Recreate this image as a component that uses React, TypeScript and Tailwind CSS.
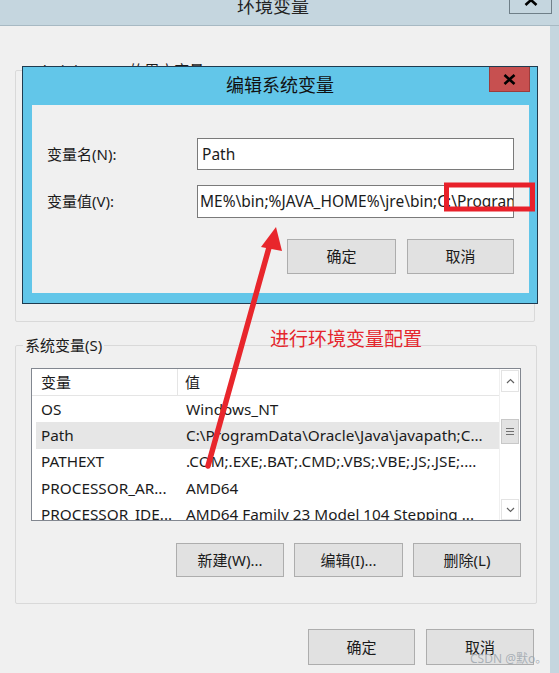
import React from 'react';

const font = "font-['Noto_Sans','Noto_Sans_CJK_SC',sans-serif]";

const btn =
  'flex items-center justify-center h-[34px] border border-[#adadad] bg-[#e1e1e1] text-[15px] text-[#1b1b1b]';

const rows = [
  { name: 'OS', value: 'Windows_NT' },
  { name: 'Path', value: 'C:\\ProgramData\\Oracle\\Java\\javapath;C...', selected: true },
  { name: 'PATHEXT', value: '.COM;.EXE;.BAT;.CMD;.VBS;.VBE;.JS;.JSE;....' },
  { name: 'PROCESSOR_AR...', value: 'AMD64' },
  { name: 'PROCESSOR_IDE...', value: 'AMD64 Family 23 Model 104 Stepping ...' },
];

function Chevron({ up }: { up?: boolean }) {
  return (
    <svg width="9" height="6" viewBox="0 0 9 6" className="text-[#606060]">
      <polyline
        points={up ? '1,5 4.5,1.5 8,5' : '1,1 4.5,4.5 8,1'}
        fill="none"
        stroke="currentColor"
        strokeWidth="1.2"
      />
    </svg>
  );
}

function VarList() {
  return (
    <div className="flex w-[490px] h-[153px] border border-[#828790] bg-white">
      <div className="flex-1 min-w-0 overflow-hidden">
        {/* header */}
        <div className="flex h-[27px] border-b border-[#e5e5e5] text-[15px] leading-[27px]">
          <div className="w-[146px] pl-[9px] border-r border-[#e5e5e5]">变量</div>
          <div className="pl-[7px]">值</div>
        </div>
        {rows.map((r) => (
          <div
            key={r.name}
            className={`flex ml-[4px] h-[26.3px] items-center text-[15.3px] whitespace-nowrap ${
              r.selected ? 'bg-[#e6e6e6]' : ''
            }`}
          >
            <div className="w-[142px] pl-[5px] overflow-hidden">{r.name}</div>
            <div className="pl-[8px]">{r.value}</div>
          </div>
        ))}
      </div>
      {/* scrollbar */}
      <div className="w-[21px] flex flex-col bg-white border-l border-[#f0f0f0]">
        <div className="h-[22px] flex items-center justify-center border border-[#e3e3e3] mt-[1px] mx-[1px]">
          <Chevron up />
        </div>
        <div className="flex-1">
          <div className="mt-[27px] h-[25px] mx-[1px] bg-[#e2e2e2] border border-[#c8c8c8] flex flex-col items-center justify-center gap-[2px]">
            <div className="w-[8px] h-px bg-[#707070]" />
            <div className="w-[8px] h-px bg-[#707070]" />
            <div className="w-[8px] h-px bg-[#707070]" />
          </div>
        </div>
        <div className="h-[21px] flex items-center justify-center border border-[#e3e3e3] mx-[1px]">
          <Chevron />
        </div>
      </div>
    </div>
  );
}

function EditDialog() {
  return (
    <div className="absolute left-[22px] top-[66px] w-[516px] h-[238px] border border-[#1f3b50] bg-[#62c6e9] flex flex-col">
      <div className="flex h-[38px]">
        <div className="flex-1 pl-[48px] text-center text-[18px] leading-[36px] text-[#111]">编辑系统变量</div>
        <div className="w-[41px] h-[25px] mr-[7px] bg-[#c75050] border border-[#9c3c3c] border-t-0 flex items-center justify-center">
          <svg width="13" height="11" viewBox="0 0 13 11">
            <path d="M1.5 1 L11.5 10 M11.5 1 L1.5 10" stroke="#000" strokeWidth="2.6" />
          </svg>
        </div>
      </div>
      <div className="ml-[9px] mr-[8px] h-[188px] bg-[#f0f0f0] pt-[33px] px-[15px]">
        <div className="flex items-center h-[32px]">
          <div className="w-[150px] text-[15px]">变量名(N):</div>
          <div className="w-[317px] h-[32px] border border-[#7a7a7a] bg-white pl-[4px] text-[15.5px] leading-[30px]">
            Path
          </div>
        </div>
        <div className="flex items-center h-[33px] mt-[15px]">
          <div className="w-[150px] text-[15px]">变量值(V):</div>
          <div className="w-[317px] h-[33px] border border-[#7a7a7a] bg-white pl-[2px] text-[15.5px] leading-[31px] whitespace-nowrap overflow-hidden">
            {'ME%\\bin;%JAVA_HOME%\\jre\\bin;C:\\Program Files'}
          </div>
        </div>
        <div className="flex justify-end gap-[11px] mt-[21px]">
          <div className={`${btn} w-[109px] h-[35px] border-[#3c7fb1]`}>确定</div>
          <div className={`${btn} w-[107px] h-[35px]`}>取消</div>
        </div>
      </div>
    </div>
  );
}

export default function App() {
  return (
    <div className={`relative w-[559px] h-[673px] overflow-hidden bg-[#f0f0f0] text-[#1b1b1b] ${font}`}>
      {/* window title bar */}
      <div className="flex h-[26px] bg-[#c5d6df] border-b border-[#a7b9c3] overflow-hidden">
        <div className="flex-1 pl-[37px] text-center">
          <span className="block -mt-[5px] text-[18px] leading-[22px] text-[#222]">环境变量</span>
        </div>
        <div className="w-[43px] h-[14px] mr-[7px] border border-t-0 border-[#6f7f88] flex justify-center overflow-hidden">
          <svg width="14" height="12" viewBox="0 0 14 12" className="-mt-[6px]">
            <path d="M1.5 1 L12.5 11 M12.5 1 L1.5 11" stroke="#000" strokeWidth="2.6" />
          </svg>
        </div>
      </div>

      {/* window body */}
      <div className="flex h-[647px]">
        <div className="w-[550px] px-[15px] bg-[#f0f0f0]">
          <fieldset className="mt-[34px] border border-[#d9d9d9] rounded-[2px]">
            <legend className="ml-[10px] px-[2px] text-[15px] leading-[20px]">Administrator 的用户变量(U)</legend>
            <div className="h-[241px]" />
          </fieldset>

          <fieldset className="mt-[13px] border border-[#d9d9d9] rounded-[2px]">
            <legend className="ml-[7px] px-[2px] text-[15px] leading-[20px]">系统变量(S)</legend>
            <div className="pt-[13px] pl-[15px] pr-[15px] pb-[26px]">
              <VarList />
              <div className="flex justify-end gap-[10px] mt-[22px]">
                <div className={`${btn} w-[108px]`}>新建(W)...</div>
                <div className={`${btn} w-[109px]`}>编辑(I)...</div>
                <div className={`${btn} w-[108px]`}>删除(L)</div>
              </div>
            </div>
          </fieldset>

          <div className="flex justify-end gap-[11px] mt-[25px] pr-px">
            <div className={`${btn} w-[107px] h-[36px] border-[#707070]`}>确定</div>
            <div className={`${btn} w-[108px] h-[36px]`}>取消</div>
          </div>
        </div>
        <div className="flex-1 bg-[#c5d6df]" />
      </div>

      <EditDialog />

      {/* annotations */}
      <div className="absolute left-[270px] top-[326px] text-[19px] leading-[26px] text-[#e5262d]">进行环境变量配置</div>
      <svg className="absolute left-0 top-0 pointer-events-none" width="559" height="673" viewBox="0 0 559 673">
        <rect x="446.5" y="185" width="86" height="24" fill="none" stroke="#e8202a" strokeWidth="5" />
        <line x1="208" y1="466" x2="270" y2="244" stroke="#e8262c" strokeWidth="5.5" strokeLinecap="round" />
        <polygon points="276,227 261,247 282,251" fill="#e8262c" />
      </svg>
      <div className="absolute left-[470px] top-[651px] text-[12px] leading-[16px] text-[#9aa3ab]/80">CSDN @默o。</div>
    </div>
  );
}
